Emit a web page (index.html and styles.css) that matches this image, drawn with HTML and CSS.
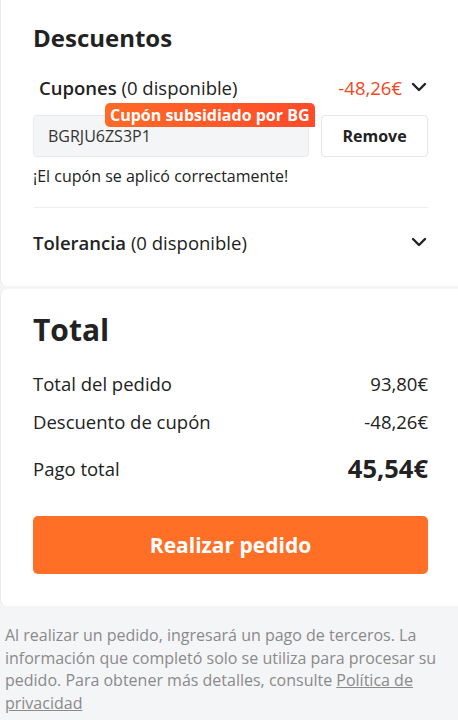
FILE: index.html
```html
<!DOCTYPE html>
<html lang="es">
<head>
    <meta charset="UTF-8">
    <meta name="viewport" content="width=device-width, initial-scale=1.0">
    <title>Pedido</title>
    <link rel="stylesheet" href="styles.css">
</head>
<body>
    <div class="card card-discounts">
        <h2 class="card-title">Descuentos</h2>

        <div class="row coupon-row">
            <span class="row-label"><b>Cupones</b> (0 disponible)</span>
            <span class="row-right">
                <span class="discount">-48,26€</span>
                <svg class="chevron" viewBox="0 0 18 18" width="18" height="18"><path d="M3 6l6 6 6-6" fill="none" stroke="#222" stroke-width="2.4" stroke-linecap="round" stroke-linejoin="round"/></svg>
            </span>
        </div>

        <div class="coupon-form">
            <div class="coupon-input-wrap">
                <span class="badge">Cupón subsidiado por BG</span>
                <input type="text" class="coupon-input" value="BGRJU6ZS3P1" readonly>
            </div>
            <button class="btn-remove">Remove</button>
        </div>
        <p class="coupon-ok">¡El cupón se aplicó correctamente!</p>

        <div class="row tolerance-row">
            <span class="row-label"><b>Tolerancia</b> (0 disponible)</span>
            <svg class="chevron" viewBox="0 0 18 18" width="18" height="18"><path d="M3 6l6 6 6-6" fill="none" stroke="#222" stroke-width="2.4" stroke-linecap="round" stroke-linejoin="round"/></svg>
        </div>
    </div>

    <div class="card card-total">
        <h2 class="card-title total-title">Total</h2>
        <div class="sum-row">
            <span>Total del pedido</span>
            <span>93,80€</span>
        </div>
        <div class="sum-row">
            <span>Descuento de cupón</span>
            <span>-48,26€</span>
        </div>
        <div class="sum-row pay-row">
            <span>Pago total</span>
            <span class="pay-amount">45,54€</span>
        </div>
        <button class="btn-order">Realizar pedido</button>
    </div>

    <p class="notice">
        Al realizar un pedido, ingresará un pago de terceros. La información que completó solo se utiliza para procesar su pedido. Para obtener más detalles, consulte <a href="#">Política de privacidad</a>
    </p>
</body>
</html>
```

FILE: styles.css
```css
body {
    margin: 0;
    background-color: #f4f5f7;
    font-family: "Open Sans", Arial, sans-serif;
    color: #222;
    overflow: hidden;
}

.card {
    background-color: #fff;
    margin: 0 -10px 0 1px;
    padding: 0 40px 0 32px;
    border-radius: 6px;
    box-shadow: -1px 0 0 #ececec;
}

.card-discounts {
    margin-top: -10px;
    padding-top: 32px;
    padding-bottom: 27px;
}

.card-title {
    margin: 0;
    font-size: 24px;
    font-weight: 700;
    line-height: 32px;
}

.row {
    display: flex;
    align-items: center;
    justify-content: space-between;
    font-size: 18.5px;
}

.row b {
    font-weight: 600;
}

.coupon-row {
    margin-top: 18px;
    padding-left: 6px;
    height: 30px;
}

.row-right {
    display: flex;
    align-items: center;
    gap: 8px;
}

.discount {
    color: #f5461e;
}

.chevron {
    display: block;
}

.coupon-form {
    display: flex;
    gap: 12px;
    margin-top: 13px;
}

.coupon-input-wrap {
    position: relative;
    flex: 1;
}

.badge {
    position: absolute;
    left: 72px;
    top: -12px;
    padding: 0 5px;
    height: 24px;
    line-height: 24px;
    font-size: 16px;
    font-weight: 700;
    color: #fff;
    background: linear-gradient(90deg, #ff6a26, #ff4a2a);
    border-radius: 5px 5px 0 5px;
    white-space: nowrap;
}

.coupon-input {
    width: 100%;
    box-sizing: border-box;
    height: 42px;
    padding: 0 14px;
    border: 1px solid #e9eaec;
    border-radius: 4px;
    background-color: #f4f5f7;
    font-family: inherit;
    font-size: 16px;
    color: #333;
    outline: none;
}

.btn-remove {
    width: 107px;
    height: 42px;
    border: 1px solid #e6e6e6;
    border-radius: 4px;
    background-color: #fff;
    font-family: inherit;
    font-size: 16px;
    font-weight: 700;
    color: #222;
}

.coupon-ok {
    margin: 8px 0 0;
    font-size: 16px;
    line-height: 22px;
    color: #222;
}

.tolerance-row {
    margin-top: 20px;
    border-top: 1px solid #eeeeee;
    padding-top: 17px;
    height: 34px;
}

.card-total {
    margin-top: 3px;
    padding-top: 21px;
    padding-bottom: 32px;
}

.total-title {
    font-size: 30px;
    line-height: 40px;
}

.sum-row {
    display: flex;
    justify-content: space-between;
    align-items: center;
    font-size: 18.5px;
    height: 38px;
}

.card-total .sum-row:first-of-type {
    margin-top: 14px;
}

.pay-row {
    height: 56px;
}

.pay-amount {
    font-size: 25.5px;
    font-weight: 700;
}

.btn-order {
    display: block;
    width: 100%;
    height: 58px;
    margin-top: 20px;
    border: none;
    border-radius: 5px;
    background-color: #ff6f26;
    color: #fff;
    font-family: inherit;
    font-size: 21px;
    font-weight: 700;
}

.notice {
    margin: 0;
    padding: 18px 8px 0 5px;
    font-size: 16px;
    line-height: 22.5px;
    color: #8a8a8a;
}

.notice a {
    color: #8a8a8a;
}
```
